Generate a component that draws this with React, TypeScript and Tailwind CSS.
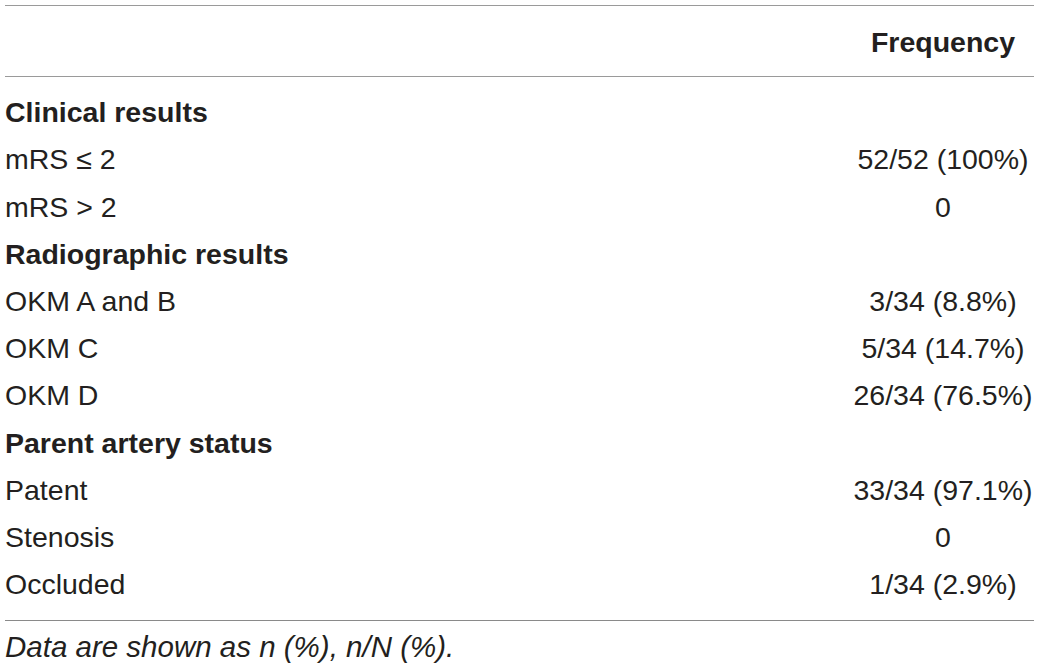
const rows: { label: string; value?: string; head?: boolean }[] = [
  { label: "Clinical results", head: true },
  { label: "mRS ≤ 2", value: "52/52 (100%)" },
  { label: "mRS > 2", value: "0" },
  { label: "Radiographic results", head: true },
  { label: "OKM A and B", value: "3/34 (8.8%)" },
  { label: "OKM C", value: "5/34 (14.7%)" },
  { label: "OKM D", value: "26/34 (76.5%)" },
  { label: "Parent artery status", head: true },
  { label: "Patent", value: "33/34 (97.1%)" },
  { label: "Stenosis", value: "0" },
  { label: "Occluded", value: "1/34 (2.9%)" },
]

export default function App() {
  return (
    <div className="w-[1039px] h-[670px] bg-white px-[5px] pt-[5px] text-[28.5px] text-[#231f20] font-['Liberation_Sans',Arial,sans-serif]">
      {/* Header */}
      <div className="border-t border-b border-[#9a9a9a] h-[72px] flex">
        <div className="flex-1" />
        <div className="w-[182px] text-center font-bold pt-[15px]">Frequency</div>
      </div>

      {/* Body */}
      <div className="border-b border-[#8a8a8a] py-[12px]">
        {rows.map((r) => (
          <div key={r.label} className="h-[47.2px] flex items-center">
            <div className={`flex-1 ${r.head ? "font-bold" : ""}`}>{r.label}</div>
            <div className="w-[182px] text-center">{r.value}</div>
          </div>
        ))}
      </div>

      {/* Footnote */}
      <div className="italic text-[29.5px] pt-[4px]">Data are shown as n (%), n/N (%).</div>
    </div>
  )
}
